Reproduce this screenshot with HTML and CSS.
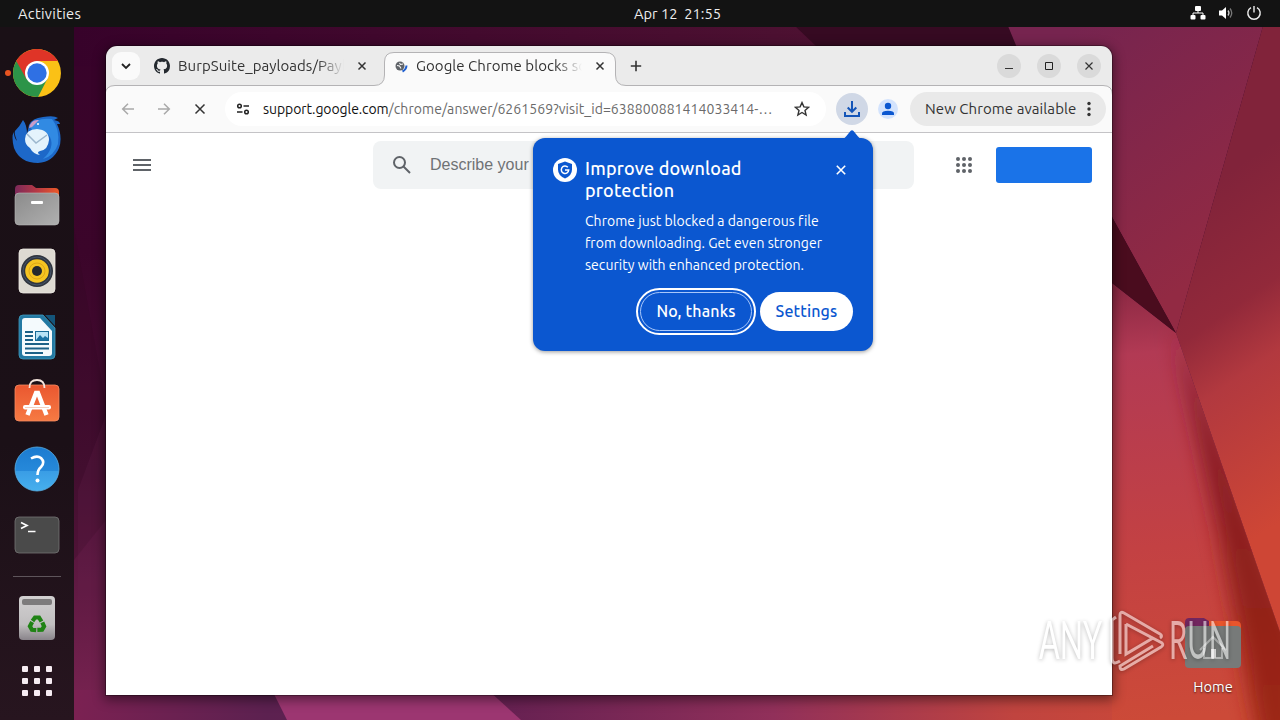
FILE: index.html
```
<!DOCTYPE html>
<html lang="en">
<head>
    <meta charset="UTF-8">
    <meta name="viewport" content="width=device-width, initial-scale=1.0">
    <title>Desktop</title>
    <link rel="stylesheet" href="styles.css">
</head>
<body>
    <div class="desktop">
        <svg class="wallpaper" width="1280" height="720" viewBox="0 0 1280 720">
            <defs>
                <linearGradient id="left" x1="0" y1="0" x2="0" y2="1">
                    <stop offset="0" stop-color="#37022a"/><stop offset=".35" stop-color="#3b052a"/>
                    <stop offset=".65" stop-color="#481034"/><stop offset="1" stop-color="#7a2452"/>
                </linearGradient>
                <linearGradient id="top" x1="0" y1="0" x2="1" y2="0">
                    <stop offset="0" stop-color="#37022a"/><stop offset="1" stop-color="#551634"/>
                </linearGradient>
                <linearGradient id="bottom" gradientUnits="userSpaceOnUse" x1="74" y1="0" x2="1280" y2="0">
                    <stop offset="0" stop-color="#7b2152"/><stop offset=".16" stop-color="#5c2150"/>
                    <stop offset=".36" stop-color="#672152"/><stop offset=".58" stop-color="#91305a"/>
                    <stop offset=".78" stop-color="#c0443f"/><stop offset=".92" stop-color="#cc4938"/>
                    <stop offset="1" stop-color="#9a2412"/>
                </linearGradient>
                <linearGradient id="upper" gradientUnits="userSpaceOnUse" x1="1060" y1="40" x2="1220" y2="260">
                    <stop offset="0" stop-color="#76244f"/><stop offset="1" stop-color="#922a43"/>
                </linearGradient>
                <linearGradient id="side" gradientUnits="userSpaceOnUse" x1="1160" y1="220" x2="1340" y2="480">
                    <stop offset="0" stop-color="#81233a"/><stop offset=".36" stop-color="#92293a"/>
                    <stop offset=".55" stop-color="#b2393f"/><stop offset="1" stop-color="#ce4635"/>
                </linearGradient>
                <linearGradient id="lower" gradientUnits="userSpaceOnUse" x1="1120" y1="290" x2="1160" y2="720">
                    <stop offset="0" stop-color="#8d2944"/><stop offset=".15" stop-color="#b23a54"/>
                    <stop offset=".6" stop-color="#c34143"/><stop offset="1" stop-color="#cc4a38"/>
                </linearGradient>
                <clipPath id="lowerClip"><path d="M1112 283L1176 333L1280 632V720H1112z"/></clipPath>
                <linearGradient id="fold" gradientUnits="userSpaceOnUse" x1="0" y1="340" x2="0" y2="720">
                    <stop offset="0" stop-color="#7d1c28"/><stop offset=".5" stop-color="#8c1f1f"/>
                    <stop offset="1" stop-color="#9c2612"/>
                </linearGradient>
                <filter id="soft" x="-50%" y="-20%" width="200%" height="140%"><feGaussianBlur stdDeviation="10"/></filter>
            </defs>
            <rect width="1280" height="720" fill="url(#left)"/>
            <rect x="74" y="26" width="1000" height="40" fill="url(#top)"/>
            <path d="M795 26h214l20 40H837z" fill="#360a22"/>
            <path d="M74 228L106 405V520L74 560z" fill="#30061f" opacity=".25"/>
            <path d="M106 415L78 490V600h28z" fill="#6b2450" opacity=".2"/>
            <rect x="74" y="690" width="1206" height="30" fill="url(#bottom)"/>
            <path d="M272 690H488L521 720H287z" fill="#9c3671"/>
            <path d="M1008 26H1263L1176 333L1112 217L1018 50z" fill="url(#upper)"/>
            <path d="M1263 26H1280V632L1176 333z" fill="url(#side)"/>
            <path d="M1112 283L1176 333L1280 632V720H1112z" fill="url(#lower)"/>
            <g clip-path="url(#lowerClip)">
                <path d="M1174 325L1300 640V760H1262L1220 540z" fill="url(#fold)" filter="url(#soft)"/>
            </g>
            <path d="M1112 217L1176 333L1112 283z" fill="#4a0c1e"/>
        </svg>

        <div class="topbar">
            <span class="activities">Activities</span>
            <span class="clock">Apr 12&nbsp; 21:55</span>
            <div class="tray">
                <svg width="16" height="16" viewBox="0 0 16 16" fill="#fff"><rect x="5" y="1" width="6" height="5" rx="1"/><rect x="0.5" y="10" width="5" height="4.500" rx="1"/><rect x="10.500" y="10" width="5" height="4.500" rx="1"/><path d="M3 10V8h10v2M8 5v3" stroke="#fff" fill="none"/></svg>
                <svg width="16" height="16" viewBox="0 0 16 16"><path d="M1 5.500h3L8 2v12l-4-3.500H1z" fill="#fff"/><path d="M10 5.500q2 2.500 0 5" stroke="#ccc" fill="none" stroke-width="1.300"/><path d="M12 3.500q3.500 4.500 0 9" stroke="#777" fill="none" stroke-width="1.300"/></svg>
                <svg width="16" height="16" viewBox="0 0 16 16" fill="none" stroke="#eee" stroke-width="1.400"><path d="M5 2.600a6.200 6.200 0 1 0 6 0M8 1v6.500"/></svg>
            </div>
        </div>

        <div class="dock">
            <div class="app running">
                <svg width="50" height="50" viewBox="0 0 48 48">
                    <circle cx="24" cy="24" r="23" fill="#fbc116"/>
                    <path d="M24 24L4.100 12.500A23 23 0 0 0 25 47L34 29.500z" fill="#2c9448"/>
                    <path d="M4.100 12.500A23 23 0 0 1 43.900 12.500H24L14 30z" fill="#df3427"/>
                    <circle cx="24" cy="24" r="11.500" fill="#fff"/>
                    <circle cx="24" cy="24" r="9.300" fill="#2f70e4"/>
                </svg>
            </div>
            <div class="app">
                <svg width="50" height="50" viewBox="0 0 50 50">
                    <path d="M3 17Q8 12 11 6Q15 11 15 20L17 11Q20 4 31 3Q42 1 46 4L42 6Q48 7 48 10L45 10Q51 23 47 34Q41 48 26 49Q8 49 2 34Q-1 22 2 18Q2 24 5 27Q2 20 3 17z" fill="#1d68c8"/>
                    <path d="M18 12Q25 3 40 5Q48 15 46 30Q42 42 31 45Q43 34 38 23Q33 14 20 16z" fill="#318ae3"/>
                    <path d="M17 14Q19 5 27 6L20 13z" fill="#c99cc8"/>
                    <path d="M13 25Q14 15 25 15Q37 16 37 26Q36 36 28 37Q24 38 28 41Q21 40 18 34Q13 31 13 25z" fill="#e4f3fc"/>
                    <path d="M15 20L24 29L35 21" fill="none" stroke="#9cb7cd" stroke-width="1.500"/>
                    <circle cx="26" cy="10" r="1" fill="#fff"/>
                </svg>
            </div>
            <div class="app">
                <svg width="46" height="42" viewBox="0 0 46 42">
                    <defs><linearGradient id="folder" x1="0" y1="0" x2="1" y2="1"><stop offset="0" stop-color="#8b8b8b"/><stop offset="1" stop-color="#b0b0b0"/></linearGradient>
                    <linearGradient id="tab"><stop offset="0" stop-color="#7b2959"/><stop offset=".5" stop-color="#b73945"/><stop offset="1" stop-color="#ec5a28"/></linearGradient></defs>
                    <path d="M1 20V5Q1 1 5 1H18L22 4H41Q45 4 45 8V20z" fill="url(#tab)"/>
                    <rect x="1" y="9" width="44" height="32" rx="4" fill="url(#folder)" stroke="#bbb" stroke-width=".6"/>
                    <rect x="17" y="17" width="12" height="3" rx="1" fill="#fff"/>
                </svg>
            </div>
            <div class="app">
                <svg width="38" height="46" viewBox="0 0 38 46">
                    <rect x="1" y="1" width="36" height="44" rx="4" fill="#dedad2" stroke="#eeeae3" stroke-width=".8"/>
                    <circle cx="19" cy="23" r="16" fill="#30353e"/><circle cx="19" cy="23" r="14" fill="none" stroke="#46556b"/>
                    <circle cx="19" cy="23" r="11.800" fill="#f6c421"/><circle cx="19" cy="23" r="8" fill="none" stroke="#d49b12" stroke-width=".7"/>
                    <circle cx="19" cy="23" r="5" fill="#25292e"/>
                </svg>
            </div>
            <div class="app">
                <svg width="38" height="46" viewBox="0 0 38 46">
                    <path d="M5 1H25L37 14V41Q37 45 33 45H5Q1 45 1 41V5Q1 1 5 1z" fill="#2379a3" stroke="#3f9bbd" stroke-width=".8"/>
                    <path d="M27 1H37V12z" fill="#14557a"/>
                    <path d="M7 4H22L34 17V39Q34 42 31 42H7Q4 42 4 39V7Q4 4 7 4z" fill="#f4fafd"/>
                    <path d="M7 18h8M7 22h8M7 26h8M7 30h24M7 34.500h24M7 39h18" stroke="#1c6187" stroke-width="1.800"/>
                    <rect x="17.500" y="17.500" width="13" height="9" fill="#b8e2f5" stroke="#186a96"/>
                    <path d="M18 26L22 21L25 24L27 22L30 24V26z" fill="#1c72a3"/>
                </svg>
            </div>
            <div class="app">
                <svg class="store" width="46" height="46" viewBox="0 0 46 46">
                    <defs><linearGradient id="bag" x1="0" y1="0" x2="0" y2="1"><stop offset="0" stop-color="#ea5730"/><stop offset="1" stop-color="#f67a43"/></linearGradient></defs>
                    <rect x="1" y="8" width="44" height="36" rx="4" fill="url(#bag)" stroke="#f58b63" stroke-width=".8"/>
                    <path d="M15.500 11Q15.500 3 23 3Q30.500 3 30.500 11" fill="none" stroke="#f4e4dc" stroke-width="1.800"/>
                    <path d="M13.500 38L22 16H24L32.500 38" fill="none" stroke="#fff" stroke-width="4.400"/>
                    <rect x="9" y="28" width="28" height="4.500" rx="2" fill="#fff"/><path d="M11 30.500h24" stroke="#f0ae91" stroke-width=".6"/>
                </svg>
            </div>
            <div class="app">
                <svg width="46" height="46" viewBox="0 0 46 46">
                    <defs><linearGradient id="help" x1="0" y1="0" x2="0" y2="1"><stop offset="0" stop-color="#1c7bd0"/><stop offset=".54" stop-color="#2689da"/><stop offset=".55" stop-color="#3a9de5"/><stop offset="1" stop-color="#46b0ee"/></linearGradient></defs>
                    <circle cx="23" cy="23" r="22" fill="url(#help)" stroke="#58aee5" stroke-width=".8"/>
                    <path d="M17 12.500Q23 9 27 12Q31.500 16.500 27 21Q23.500 24 23.500 29" fill="none" stroke="#fff" stroke-width="2.600"/><circle cx="23.500" cy="34.500" r="2" fill="#fff"/>
                </svg>
            </div>
            <div class="app">
                <svg width="46" height="38" viewBox="0 0 46 38">
                    <rect x="1" y="1" width="44" height="36" rx="4" fill="#4a4a4a" stroke="#737373" stroke-width=".8"/>
                    <path d="M7 6.500L13 9.500L7 12.500M14 15.500h7.500" fill="none" stroke="#fff" stroke-width="1.700"/>
                </svg>
            </div>
            <div class="separator"></div>
            <div class="app bin">
                <svg width="38" height="46" viewBox="0 0 38 46">
                    <defs><linearGradient id="bin" x1="0" y1="0" x2="0" y2="1"><stop offset="0" stop-color="#d2d0d1"/><stop offset=".65" stop-color="#c0bebf"/><stop offset="1" stop-color="#89848a"/></linearGradient></defs>
                    <rect x="1" y="1" width="36" height="44" rx="4" fill="url(#bin)"/>
                    <rect x="4" y="4" width="30" height="6" rx="2" fill="#7d7b7c"/>
                    <g fill="none" stroke="#208315" stroke-width="4.200">
                        <path d="M14.500 26L17 22.500H21L23.500 26.500"/>
                        <path d="M14.500 26L17 22.500H21L23.500 26.500" transform="rotate(120 19 29.500)"/>
                        <path d="M14.500 26L17 22.500H21L23.500 26.500" transform="rotate(240 19 29.500)"/>
                    </g>
                </svg>
            </div>
            <div class="all-apps">
                <i></i><i></i><i></i><i></i><i></i><i></i><i></i><i></i><i></i>
            </div>
        </div>

        <div class="home">
            <svg width="58" height="54" viewBox="0 0 58 54">
                <path d="M1 26V7Q1 3 5 3H20L25 6H52Q57 6 57 11V26z" fill="#e9552c"/>
                <path d="M1 26V7Q1 3 5 3H20L25 6V13H1z" fill="#72265f"/>
                <rect x="1" y="11" width="56" height="42" rx="4" fill="#777a79"/>
                <path d="M16 35L29 22L42 35M20 33V43H38V33" fill="none" stroke="#b5b7b6" stroke-width="2"/><rect x="27" y="34" width="5" height="9" fill="#ddd"/>
            </svg>
            <span>Home</span>
        </div>

        <div class="window">
            <svg class="frame" width="1006" height="88" viewBox="0 0 1006 88">
                <path d="M-1 88V49Q-.5 39.500 9 39.500H268Q278.500 39.500 278.500 29V16Q278.500 6.500 288 6.500H499Q509.500 6.500 509.500 16V29Q509.500 39.500 520 39.500H997Q1006.500 39.500 1006.500 49V88z" fill="#fafafa" stroke="#b4b3b5"/>
            </svg>
            <div class="tabstrip">
                <div class="tab-search">
                    <svg width="12" height="12" viewBox="0 0 12 12" fill="none" stroke="#222" stroke-width="1.800"><path d="M2 4l4 4 4-4"/></svg>
                </div>
                <div class="tab">
                    <svg width="16" height="16" viewBox="0 0 16 16" fill="#24292f"><path d="M8 0C3.580 0 0 3.580 0 8c0 3.540 2.290 6.530 5.470 7.590.4.070.55-.17.55-.38 0-.19-.01-.82-.01-1.490-2.010.37-2.530-.49-2.690-.94-.09-.23-.48-.94-.82-1.130-.28-.15-.68-.52-.01-.53.63-.01 1.080.58 1.230.82.72 1.210 1.870.87 2.330.66.07-.52.28-.87.51-1.070-1.780-.2-3.640-.89-3.640-3.950 0-.87.310-1.590.82-2.150-.08-.2-.36-1.020.08-2.120 0 0 .67-.21 2.200.82.64-.18 1.320-.27 2-.27s1.360.09 2 .27c1.530-1.040 2.200-.82 2.200-.82.44 1.100.16 1.920.08 2.120.51.56.82 1.270.82 2.150 0 3.070-1.870 3.750-3.650 3.950.29.25.54.73.54 1.480 0 1.070-.01 1.930-.01 2.200 0 .21.15.46.55.38A8.010 8.010 0 0 0 16 8c0-4.420-3.580-8-8-8z"/></svg>
                    <span class="tab-title">BurpSuite_payloads/Payloads</span>
                    <svg width="16" height="16" viewBox="0 0 16 16" stroke="#333" stroke-width="1.500"><path d="M4.500 4.500l7 7M11.500 4.500l-7 7"/></svg>
                </div>
                <div class="tab active">
                    <svg width="16" height="16" viewBox="0 0 16 16"><circle cx="6" cy="8" r="4.500" fill="#5f6368"/><path d="M3 7.500l2.500.5 1.500 2.500M5.500 5l1 1.500 2.500-.5" stroke="#fafafa" stroke-width="1.100" fill="none"/><path d="M12.500 7.500Q12.300 11.500 8.500 13.500" stroke="#1f5fcf" stroke-width="2" fill="none"/></svg>
                    <span class="tab-title">Google Chrome blocks some downloads</span>
                    <svg width="16" height="16" viewBox="0 0 16 16" stroke="#333" stroke-width="1.500"><path d="M4.500 4.500l7 7M11.500 4.500l-7 7"/></svg>
                </div>
                <div class="new-tab">
                    <svg width="14" height="14" viewBox="0 0 14 14" stroke="#333" stroke-width="1.600"><path d="M7 1.800v10.400M1.800 7h10.400"/></svg>
                </div>
                <div class="controls">
                    <span><svg width="12" height="12" viewBox="0 0 12 12" stroke="#333"><path d="M2 8.500h8"/></svg></span>
                    <span><svg width="12" height="12" viewBox="0 0 12 12" stroke="#222" fill="none"><path d="M2.500 2.500h7v7h-7z"/></svg></span>
                    <span><svg width="12" height="12" viewBox="0 0 12 12" stroke="#333" stroke-width="1.200"><path d="M2.500 2.500l7 7M9.500 2.500l-7 7"/></svg></span>
                </div>
            </div>
            <div class="toolbar">
                <div class="nav"><svg width="16" height="16" viewBox="0 0 16 16" stroke="#a9a9a9" stroke-width="1.500" fill="none"><path d="M14 8H3M8 2.700L2.700 8L8 13.300"/></svg></div>
                <div class="nav"><svg width="16" height="16" viewBox="0 0 16 16" stroke="#a9a9a9" stroke-width="1.500" fill="none"><path d="M2 8h11M8 2.700L13.300 8L8 13.300"/></svg></div>
                <div class="nav"><svg width="16" height="16" viewBox="0 0 16 16" stroke="#333" stroke-width="1.500"><path d="M3.500 3.500l9 9M12.500 3.500l-9 9"/></svg></div>
                <div class="omnibox">
                    <svg width="14" height="14" viewBox="0 0 14 14" stroke="#222" stroke-width="1.500" fill="none"><circle cx="3.500" cy="4" r="1.800"/><path d="M7.500 4H13M1 10h5.500"/><circle cx="10.500" cy="10" r="1.800"/></svg>
                    <span class="url"><b>support.google.com</b>/chrome/answer/6261569?visit_id=638800881414033414-…</span>
                    <svg class="star" width="16" height="16" viewBox="0 0 16 16" stroke="#333" stroke-width="1.400" fill="none"><path d="M8 1.600L9.900 5.900L14.600 6.300L11 9.400L12.100 14L8 11.500L3.900 14L5 9.400L1.400 6.300L6.100 5.900z"/></svg>
                </div>
                <div class="download">
                    <svg width="18" height="18" viewBox="0 0 18 18" stroke="#1455b8" stroke-width="2" fill="none"><path d="M9 1v10.500M4.700 7.500L9 11.800L13.300 7.500M2 12v4h14v-4"/></svg>
                </div>
                <div class="profile">
                    <svg width="20" height="20" viewBox="0 0 20 20" fill="#0b57d0"><circle cx="10" cy="7" r="3.200"/><path d="M4 16V14.500Q4 11.700 10 11.700T16 14.500V16z"/></svg>
                </div>
                <div class="update">
                    <span>New Chrome available</span>
                    <svg width="4" height="16" viewBox="0 0 4 16" fill="#333"><circle cx="2" cy="2.500" r="1.700"/><circle cx="2" cy="8" r="1.700"/><circle cx="2" cy="13.500" r="1.700"/></svg>
                </div>
            </div>
            <div class="page">
                <svg class="menu" width="18" height="12" viewBox="0 0 18 12" stroke="#5f6368" stroke-width="2"><path d="M0 1h18M0 6h18M0 11h18"/></svg>
                <div class="search">
                    <svg width="20" height="20" viewBox="0 0 20 20" fill="none" stroke="#5f6368" stroke-width="2"><circle cx="7.500" cy="7.500" r="5.500"/><path d="M11.500 11.500l6.500 6.500"/></svg>
                    <span>Describe your</span>
                </div>
                <svg class="apps" width="16" height="16" viewBox="0 0 16 16" fill="#5f6368"><circle cx="2" cy="2" r="2"/><circle cx="8" cy="2" r="2"/><circle cx="14" cy="2" r="2"/><circle cx="2" cy="8" r="2"/><circle cx="8" cy="8" r="2"/><circle cx="14" cy="8" r="2"/><circle cx="2" cy="14" r="2"/><circle cx="8" cy="14" r="2"/><circle cx="14" cy="14" r="2"/></svg>
                <div class="sign-in"></div>
            </div>

            <div class="bubble">
                <svg class="tip" width="20" height="10" viewBox="0 0 20 10"><path d="M0 10Q3 9 4 7.500L8.500 2Q10 .5 11.500 2L16 7.500Q17 9 20 10z" fill="#0b57d0"/></svg>
                <svg class="shield" width="24" height="24" viewBox="0 0 24 24"><circle cx="12" cy="12" r="12" fill="#fff"/><path d="M12 3.500L19 6V11.500Q19 17.500 12 20.500Q5 17.500 5 11.500V6z" fill="#0b57d0"/><path d="M14.800 9.300A3.700 3.700 0 1 0 15.700 12H12" fill="none" stroke="#fff" stroke-width="1.500"/></svg>
                <div class="message">
                    <h1>Improve download<br>protection</h1>
                    <p>Chrome just blocked a dangerous file<br>from downloading. Get even stronger<br>security with enhanced protection.</p>
                    <div class="buttons">
                        <button class="no">No, thanks</button>
                        <button class="yes">Settings</button>
                    </div>
                </div>
                <svg class="close" width="16" height="16" viewBox="0 0 16 16" stroke="#fff" stroke-width="1.600"><path d="M3.800 3.800l8.400 8.400M12.200 3.800l-8.400 8.400"/></svg>
            </div>
        </div>

        <svg class="watermark" width="200" height="70" viewBox="0 0 200 70">
            <g class="mark-text">
                <text x="3" y="52" textLength="63" lengthAdjust="spacingAndGlyphs">ANY</text>
                <text x="133" y="52" textLength="62" lengthAdjust="spacingAndGlyphs">RUN</text>
            </g>
            <g class="mark-play">
                <path d="M84 47V8Q84 4 88 6L124 27Q127 29 124 31"/>
                <path d="M90 17L126 36Q128 38 125 40L88 62Q84 64 84 59L117 39"/>
                <path d="M84 54Q76 59 76 51V13L80 10M90 17V47L117 31"/>
            </g>
        </svg>
    </div>
</body>
</html>
```
FILE: styles.css
```
body {
    margin: 0;
    font-family: Ubuntu, "Noto Sans", sans-serif;
    overflow: hidden;
}
svg {
    display: block;
    flex-shrink: 0;
}
.desktop {
    position: relative;
    width: 1280px;
    height: 720px;
    overflow: hidden;
}
.wallpaper {
    position: absolute;
    top: 0;
    left: 0;
}

/* Top bar */
.topbar {
    position: relative;
    display: flex;
    align-items: center;
    box-sizing: border-box;
    height: 27px;
    padding: 0 18px;
    background: #131313;
    color: #eee;
    font-size: 14.67px;
    line-height: 25px;
}
.activities {
    width: 616px;
    letter-spacing: 0.3px;
}
.clock {
    margin-bottom: 1px;
}
.tray {
    display: flex;
    gap: 12px;
    margin-left: auto;
    margin-bottom: 1px;
}

/* Dock */
.dock {
    position: relative;
    display: flex;
    flex-direction: column;
    align-items: center;
    box-sizing: border-box;
    width: 74px;
    height: 693px;
    padding-top: 13px;
    background: linear-gradient(#1a1016, #1b1017 60%, #27151f);
}
.app {
    position: relative;
    display: flex;
    align-items: center;
    justify-content: center;
    box-sizing: border-box;
    width: 74px;
    height: 66px;
    flex-shrink: 0;
}
.running::before {
    content: "";
    position: absolute;
    left: 5px;
    top: 30px;
    width: 6px;
    height: 6px;
    border-radius: 50%;
    background: #e95420;
}
.store {
    margin-bottom: 6px;
}
.bin {
    padding-bottom: 2px;
}
.separator {
    width: 48px;
    height: 1px;
    margin: 8px 0 9px;
    background: #5e555b;
    flex-shrink: 0;
}
.all-apps {
    display: grid;
    grid-template-columns: repeat(3, 6px);
    gap: 6px;
    margin-top: 14px;
}
.all-apps i {
    height: 6px;
    border-radius: 1px;
    background: #f6ecf2;
}

.home {
    position: absolute;
    left: 1184px;
    top: 615px;
    width: 58px;
    text-align: center;
    color: #fff;
    font-size: 14.67px;
    text-shadow: 0 1px 2px rgba(0, 0, 0, 0.7);
}
.home span {
    display: block;
    margin-top: 8px;
    line-height: 20px;
}

/* Browser window */
.window {
    position: absolute;
    left: 106px;
    top: 46px;
    width: 1006px;
    height: 649px;
    border-radius: 11px 11px 0 0;
    background: #ebebeb;
    box-shadow: 0 0 0 1px rgba(0, 0, 0, 0.3), 0 3px 12px 2px rgba(0, 0, 0, 0.45);
    color: #333;
    font-size: 15px;
}
.frame {
    position: absolute;
    top: 0;
    left: 0;
}
.tabstrip {
    position: relative;
    display: flex;
    align-items: center;
    height: 40px;
    padding-left: 6px;
}
.tab-search {
    display: flex;
    align-items: center;
    justify-content: center;
    width: 28px;
    height: 28px;
    border-radius: 9px;
    background: #fafafa;
}
.tab {
    display: flex;
    align-items: center;
    box-sizing: border-box;
    width: 244px;
    padding-left: 14px;
}
.tab.active {
    width: 232px;
    padding-left: 10px;
}
.tab-title {
    width: 166px;
    margin: 0 10px 2px 8px;
    overflow: hidden;
    white-space: nowrap;
    letter-spacing: 0.05px;
    -webkit-mask-image: linear-gradient(90deg, #000 84%, transparent);
    mask-image: linear-gradient(90deg, #000 84%, transparent);
}
.active .tab-title {
    margin-left: 6px;
}
.new-tab {
    display: flex;
    justify-content: center;
    width: 40px;
}
.controls {
    display: flex;
    gap: 16px;
    margin: 0 11px 0 auto;
}
.controls span {
    display: flex;
    align-items: center;
    justify-content: center;
    width: 24px;
    height: 24px;
    border-radius: 50%;
    background: #dadada;
}
.toolbar {
    position: relative;
    display: flex;
    align-items: center;
    box-sizing: border-box;
    height: 47px;
    padding: 0 6px 0 4px;
    border-bottom: 1px solid #c4c3c6;
}
.nav {
    display: flex;
    justify-content: center;
    width: 36px;
}
.omnibox {
    display: flex;
    align-items: center;
    box-sizing: border-box;
    width: 601px;
    height: 34px;
    margin-left: 7px;
    padding: 0 16px 0 11px;
    border-radius: 17px;
    background: #fff;
}
.url {
    margin-left: 13px;
    white-space: nowrap;
    color: #6a6a6a;
    font-size: 14px;
    letter-spacing: 0.07px;
}
.url b {
    font-weight: normal;
    color: #111;
    letter-spacing: -0.08px;
}
.star {
    margin-left: auto;
}
.download {
    display: flex;
    align-items: center;
    justify-content: center;
    width: 32px;
    height: 32px;
    margin-left: 10px;
    border-radius: 50%;
    background: #d0d8e6;
}
.profile {
    margin: 0 12px 0 10px;
    border-radius: 50%;
    background: #d3e3fd;
}
.update {
    display: flex;
    align-items: center;
    justify-content: space-between;
    box-sizing: border-box;
    width: 196px;
    height: 34px;
    padding: 0 15px;
    border-radius: 17px;
    background: #e9e9e9;
    white-space: nowrap;
}
.update span {
    margin-bottom: 2px;
    letter-spacing: 0.07px;
}
.page {
    position: relative;
    display: flex;
    align-items: flex-start;
    box-sizing: border-box;
    height: 562px;
    padding: 8px 20px 0 27px;
    background: #fff;
}
.menu {
    margin: 18px 222px 0 0;
}
.search {
    display: flex;
    align-items: center;
    box-sizing: border-box;
    width: 541px;
    height: 48px;
    padding-left: 19px;
    border-radius: 8px;
    background: #f1f3f4;
    color: #6f7275;
    font: 16px "Liberation Sans", Arial, sans-serif;
}
.search span {
    margin-left: 18px;
}
.apps {
    margin: 16px 0 0 42px;
}
.sign-in {
    width: 96px;
    height: 36px;
    margin: 6px 0 0 auto;
    border-radius: 3px;
    background: #1a73e8;
}

/* Download protection bubble */
.bubble {
    position: absolute;
    left: 427px;
    top: 92px;
    display: flex;
    align-items: flex-start;
    box-sizing: border-box;
    width: 340px;
    height: 213px;
    padding: 20px;
    border-radius: 12px;
    background: #0b57d0;
    color: #fff;
    box-shadow: 0 1px 4px rgba(0, 0, 0, 0.4);
}
.tip {
    position: absolute;
    left: 309px;
    top: -9px;
}
.message {
    width: 268px;
    margin-left: 8px;
}
.message h1 {
    margin: -1px 0 0;
    font-size: 18px;
    font-weight: 500;
    line-height: 22px;
    white-space: nowrap;
    letter-spacing: 0.2px;
}
.message p {
    margin: 9px 0 16px;
    font-size: 14px;
    line-height: 22px;
    white-space: nowrap;
    letter-spacing: 0.03px;
}
.buttons {
    display: flex;
    justify-content: flex-end;
    gap: 8px;
}
.buttons button {
    height: 39px;
    padding: 0 0 2px;
    border: none;
    border-radius: 20px;
    font: 500 16px Ubuntu, "Noto Sans", sans-serif;
    letter-spacing: 0.15px;
}
.buttons .no {
    width: 112px;
    border: 1px solid #a8c7fa;
    background: #0b57d0;
    color: #fff;
    outline: 2px solid #fff;
    outline-offset: 2px;
}
.buttons .yes {
    width: 93px;
    background: #fff;
    color: #0b57d0;
}
.close {
    position: absolute;
    right: 24px;
    top: 24px;
}

.watermark {
    position: absolute;
    left: 1036px;
    top: 607px;
    filter: drop-shadow(0 1px 2px rgba(0, 0, 0, 0.5));
    opacity: 0.55;
}
.mark-text {
    fill: #fff;
    font: 400 52px Lato, sans-serif;
}
.mark-play {
    fill: none;
    stroke: #fff;
    stroke-width: 3;
}
```
